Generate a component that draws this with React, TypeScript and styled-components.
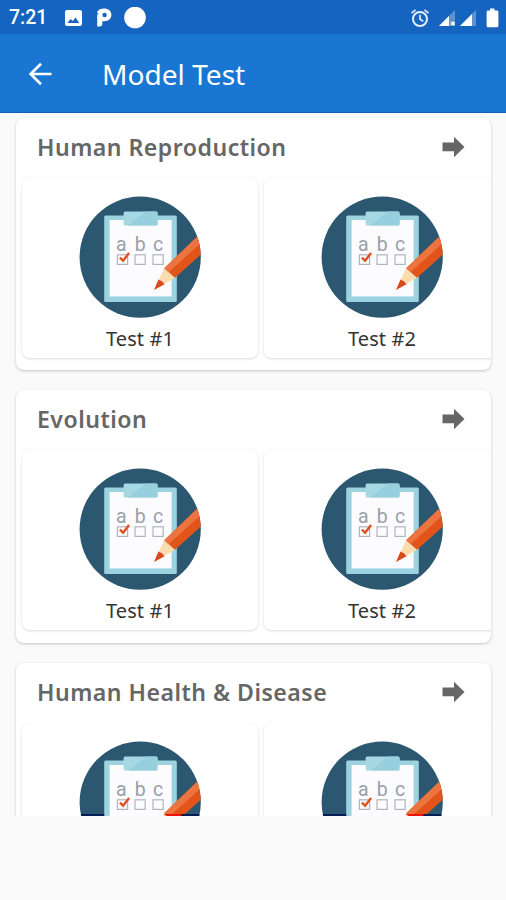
import React from 'react';
import styled, { createGlobalStyle } from 'styled-components';

const GlobalStyle = createGlobalStyle`
  * { box-sizing: border-box; }
  body { margin: 0; background: #fafafa; font-family: "Noto Sans", "Open Sans", sans-serif; }
`;

const Screen = styled.div`
  width: 506px;
  height: 900px;
  overflow: hidden;
  background: #fafafa;
`;

const StatusBar = styled.div`
  height: 34px;
  padding: 1px 7px 0 9px;
  display: flex;
  align-items: center;
  justify-content: space-between;
  background: #1565c0;
  color: #fff;
`;

const StatusGroup = styled.div`
  display: flex;
  align-items: center;
  height: 34px;
`;

const Clock = styled.span`
  width: 54px;
  padding-top: 1px;
  font: 500 19.5px/34px Roboto, sans-serif;
`;

const Glyph = styled.svg<{ $gap?: number }>`
  display: block;
  flex: none;
  margin-left: ${({ $gap = 0 }) => $gap}px;
`;

const AppBar = styled.header`
  height: 79px;
  padding: 2px 0 0 26px;
  display: flex;
  align-items: center;
  background: #1976d2;
  border-bottom: 1px solid #0f62bb;
  color: #fff;
`;

const BackButton = styled.button`
  width: 76px;
  padding: 0;
  border: 0;
  background: none;
  color: inherit;
`;

const Title = styled.h1`
  margin: 0;
  font-size: 28.1px;
  line-height: 40px;
  font-weight: 400;
`;

const Content = styled.main`
  height: 703px;
  padding: 5px 15px 0 16px;
  overflow: hidden;
  display: flex;
  flex-direction: column;
  gap: 20px;
`;

const SectionCard = styled.section`
  flex: none;
  height: 252.3px;
  overflow: hidden;
  border-radius: 8px;
  background: #fff;
  box-shadow: 0 1px 3px rgba(0, 0, 0, 0.22);
`;

const SectionHeader = styled.div`
  height: 60px;
  padding: 0 26px 2px 21px;
  display: flex;
  align-items: center;
  justify-content: space-between;
`;

const SectionTitle = styled.h2`
  margin: 0;
  color: #666;
  font-size: 23.1px;
  line-height: 30px;
  font-weight: 600;
  letter-spacing: 0.48px;
`;

const TileRow = styled.div`
  display: flex;
  gap: 6px;
  padding-left: 6px;
`;

const Tile = styled.article`
  flex: none;
  width: 236px;
  height: 180px;
  padding-top: 18px;
  display: flex;
  flex-direction: column;
  align-items: center;
  border-radius: 8px;
  background: #fff;
  box-shadow: 0 1px 3px rgba(0, 0, 0, 0.15);
`;

const TileLabel = styled.span`
  margin-top: 7px;
  color: #333;
  font-size: 20px;
  line-height: 28px;
  letter-spacing: 0.1px;
`;

function ExamArt({ id, edge }: { id: string; edge?: boolean }) {
  return (
    <Glyph width="122" height="122" viewBox="0 0 122 122">
      <defs>
        <clipPath id={id}><circle cx="61.2" cy="61.2" r="60.6" /></clipPath>
      </defs>
      <g clipPath={`url(#${id})`}>
        <rect width="122" height="122" fill="#2b5870" />
        <rect x="25.2" y="19.6" width="72.6" height="86.5" rx="1.5" fill="#9dd3e0" />
        <rect x="30.6" y="24" width="62" height="76.4" fill="#fcfcfe" />
        <rect x="44.6" y="15.6" width="34" height="14" rx="1.5" fill="#a6d8e4" />
        <path d="M49 29.6 67 15.6H77a1.5 1.5 0 0 1 1.500 1.500V28.100a1.500 1.500 0 0 1-1.500 1.500Z" fill="#98cfdf" />
        <g fill="#98a0a8" fontFamily="Roboto, sans-serif" fontSize="19.5" textAnchor="middle">
          <text x="42.2" y="55.2">a</text>
          <text x="61.2" y="55.2">b</text>
          <text x="79.2" y="55.2">c</text>
        </g>
        <g fill="none" stroke="#b1b5ba" strokeWidth="1.2">
          <rect x="38.4" y="58.8" width="10.2" height="9.6" />
          <rect x="56" y="58.8" width="10.2" height="9.6" />
          <rect x="74" y="58.8" width="10.2" height="9.6" />
        </g>
        <path d="m40.900 61.700 3.200 3 6-7.800" fill="none" stroke="#e2501f" strokeWidth="2.4" />
        <path d="m75 94 10.200-21.800 10.800 9.600Z" fill="#fbdcae" />
        <path d="m75 94 4.500-10.400q3.500 1 6 4.600Z" fill="#d94a1c" />
        <path d="M85.200 72.200 122 37v21.500L96 81.800Z" fill="#e3541a" />
        <path d="M85.200 72.200 122 37v10L89.600 76.200Z" fill="#ec7440" />
        {edge && (
          <>
            <path d="M0 73h25.200v3H0ZM102 73h20v3h-20Z" fill="#061c55" />
            <path d="M85 73h18l-2 3H89Z" fill="#ed1405" />
          </>
        )}
      </g>
    </Glyph>
  );
}

const sections = [
  { title: 'Human Reproduction', cropped: false },
  { title: 'Evolution', cropped: false },
  { title: 'Human Health & Disease', cropped: true },
];

export default function App() {
  return (
    <Screen>
      <GlobalStyle />
      <StatusBar>
        <StatusGroup>
          <Clock>7:21</Clock>
          <Glyph width="20" height="18" viewBox="0 0 20 18">
            <rect x="2" y="1" width="17" height="16" rx="2" fill="#fff" />
            <path d="m4.500 14 2.800-4 2.600 2 2.700-3.500 3.600 5.500Z" fill="#1565c0" />
          </Glyph>
          <Glyph $gap={14} width="16" height="19" viewBox="0 0 16 19">
            <path fill="#fff" fillRule="evenodd" d="M0 4C1.500 1.500 4 .5 7 .5c4.500 0 7.400 2.500 7.400 6.300 0 4-3 6.400-7 6.400H5.300V16c0 1.500-1 2.400-2.700 2.400H.2V6.500H1.500ZM7.600 4.800a2.200 2.200 0 1 0 0 4.400 2.200 2.200 0 0 0 0-4.400Z" />
          </Glyph>
          <Glyph $gap={11} width="22" height="22" viewBox="0 0 22 22">
            <circle cx="11" cy="10.500" r="10.800" fill="#fff" />
          </Glyph>
        </StatusGroup>
        <StatusGroup>
          <Glyph width="20" height="20" viewBox="0 0 20 20" fill="none" stroke="#e3edfa" strokeWidth="2">
            <circle cx="10" cy="11" r="7" />
            <path d="M10 6.800V11.200l3.300 2M1.500 5.200 5.500 1.900M18.500 5.200 14.500 1.900" strokeWidth="1.7" />
          </Glyph>
          <Glyph $gap={8} width="18" height="18" viewBox="0 0 18 18">
            <path d="M17 1v16H1Z" fill="#5d93d3" />
            <path d="M11 7v10H1Z" fill="#fff" />
            <path d="M12 12h5v5h-5Z" fill="#8aa9d9" />
            <path d="M13.500 13h3v3h-3Z" fill="#fff" />
          </Glyph>
          <Glyph $gap={3} width="18" height="18" viewBox="0 0 18 18">
            <path d="M17 1v16H1Z" fill="#5d93d3" />
            <path d="M13 5v12H1Z" fill="#fff" />
          </Glyph>
          <Glyph $gap={9} width="13" height="20" viewBox="0 0 13 20">
            <path d="M4 .5h4.500v2H11a1.400 1.400 0 0 1 1.400 1.400v14a1.400 1.400 0 0 1-1.400 1.400H2A1.400 1.400 0 0 1 .6 17.900v-14A1.400 1.400 0 0 1 2 2.500h2Z" fill="#fff" />
          </Glyph>
        </StatusGroup>
      </StatusBar>
      <AppBar>
        <BackButton aria-label="Back">
          <Glyph width="28" height="28" viewBox="0 0 28 28" fill="none" stroke="#fff" strokeWidth="2.6">
            <path d="M25.500 14H4.500M15 3.800 4.600 14 15 24.200" />
          </Glyph>
        </BackButton>
        <Title>Model Test</Title>
      </AppBar>
      <Content>
        {sections.map(({ title, cropped }, index) => (
          <SectionCard key={title}>
            <SectionHeader>
              <SectionTitle>{title}</SectionTitle>
              <Glyph width="23" height="22" viewBox="0 0 23 22">
                <path d="M.5 6.500H12V.8L22.500 11 12 21.200V15.300H.5Z" fill="#666" />
              </Glyph>
            </SectionHeader>
            <TileRow>
              {[1, 2].map((n) => (
                <Tile key={n}>
                  <ExamArt id={`exam-${index}-${n}`} edge={cropped} />
                  {!cropped && <TileLabel>Test #{n}</TileLabel>}
                </Tile>
              ))}
            </TileRow>
          </SectionCard>
        ))}
      </Content>
    </Screen>
  );
}
